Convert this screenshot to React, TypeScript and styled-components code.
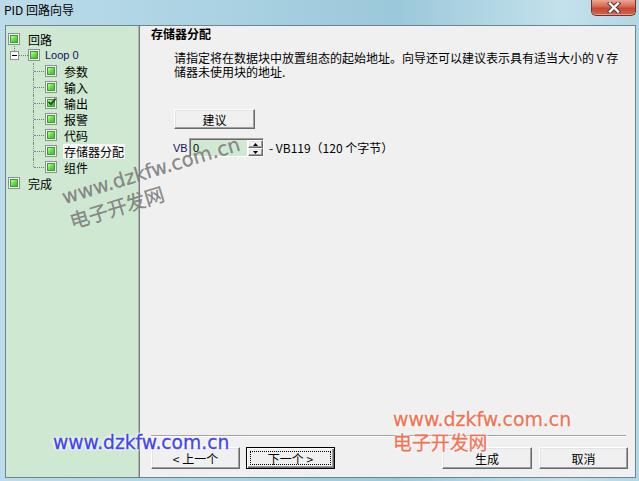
import * as React from 'react';
import styled, { createGlobalStyle, css } from 'styled-components';

type TreeItem = {
  label: string;
  level: 0 | 1 | 2;
  checked?: boolean;
  selected?: boolean;
  last?: boolean;
};

const tree: TreeItem[] = [
  { label: '回路', level: 0 },
  { label: 'Loop 0', level: 1 },
  { label: '参数', level: 2 },
  { label: '输入', level: 2 },
  { label: '输出', level: 2, checked: true },
  { label: '报警', level: 2 },
  { label: '代码', level: 2 },
  { label: '存储器分配', level: 2, selected: true },
  { label: '组件', level: 2, last: true },
  { label: '完成', level: 0 },
];

const indent = { 0: 2, 1: 4, 2: 27 };
const labelGap = { 0: 8, 1: 5, 2: 7 };

const GlobalStyle = createGlobalStyle`
  html, body {
    margin: 0;
    padding: 0;
    background: #ffffff;
  }
  body {
    font-family: "Noto Sans CJK SC", "DejaVu Sans", sans-serif;
    font-size: 12px;
    color: #000000;
  }
`;

const App = () => {
  return (
    <>
      <GlobalStyle />
      <Window>
        <TitleBar>
          <Title>PID 回路向导</Title>
          <CloseButton>
            <svg width="14" height="11" viewBox="0 0 14 11">
              <path d="M3 1.5 L11 9.5 M11 1.5 L3 9.5" stroke="#4a3a44" strokeWidth="4.4" strokeLinecap="square" />
              <path d="M3 1.5 L11 9.5 M11 1.5 L3 9.5" stroke="#ffffff" strokeWidth="2.4" strokeLinecap="square" />
            </svg>
          </CloseButton>
        </TitleBar>
        <Client>
          <Sidebar>
            {tree.map((item) => (
              <TreeNode key={item.label} item={item} />
            ))}
          </Sidebar>
          <Main>
            <Header>存储器分配</Header>
            <Description>
              <Line>请指定将在数据块中放置组态的起始地址。向导还可以建议表示具有适当大小的 V 存</Line>
              <Line>储器未使用块的地址.</Line>
            </Description>
            <SuggestButton>建议</SuggestButton>
            <VbRow>
              <VbLabel>VB</VbLabel>
              <SpinBox>
                <Field>0</Field>
                <Spinner>
                  <SpinHalf>
                    <svg width="5" height="3" viewBox="0 0 5 3"><polygon points="0,3 2.5,0 5,3" fill="#000" /></svg>
                  </SpinHalf>
                  <SpinHalf>
                    <svg width="5" height="3" viewBox="0 0 5 3"><polygon points="0,0 2.5,3 5,0" fill="#000" /></svg>
                  </SpinHalf>
                </Spinner>
              </SpinBox>
              <RangeText>- VB119（120 个字节）</RangeText>
            </VbRow>
            <Spacer />
            <Separator />
            <ButtonRow>
              <WizardButton>&lt; 上一个</WizardButton>
              <WizardButton $default>下一个 &gt;</WizardButton>
              <WizardButton $push>生成</WizardButton>
              <WizardButton>取消</WizardButton>
            </ButtonRow>
          </Main>
        </Client>

        <Watermark $left={59} $top={186} $angle={-17} $size={19.6} $lineHeight={26} $color="rgba(84, 84, 84, 0.68)" $glow={false}>
          www.dzkfw.com.cn
          <br />
          电子开发网
        </Watermark>
        <Watermark $left={53} $top={432} $size={18.7} $lineHeight={22} $color="#4444ee" $glow>
          www.dzkfw.com.cn
        </Watermark>
        <Watermark $left={393} $top={407} $size={18.9} $lineHeight={24} $color="#f07454" $glow>
          www.dzkfw.com.cn
          <br />
          电子开发网
        </Watermark>
      </Window>
    </>
  );
};

export default App;

const TreeNode = ({ item }: { item: TreeItem }) => (
  <Row $indent={indent[item.level]}>
    {item.level === 1 && (
      <>
        <Expander />
        <HLine />
      </>
    )}
    {item.level === 2 && <Guide $last={item.last} />}
    <CheckBox>
      <CheckFill>
        {item.checked && (
          <svg width="10" height="10" viewBox="0 0 10 10">
            <path d="M1.5 4.8 L4 7.3 L8.6 1.6" fill="none" stroke="#1d4a1d" strokeWidth="1.7" />
          </svg>
        )}
      </CheckFill>
    </CheckBox>
    <Label $gap={labelGap[item.level]} $selected={item.selected} $latin={item.level === 1}>
      {item.label}
    </Label>
  </Row>
);

const Window = styled.div`
  position: relative;
  width: 639px;
  height: 481px;
  display: flex;
  flex-direction: column;
  overflow: hidden;
  background: linear-gradient(90deg, #bcdce9 0%, #aad2e2 35%, #9bc8da 62%, #c3e1eb 88%, #b2d7e5 100%);
`;

const TitleBar = styled.div`
  height: 25px;
  display: flex;
  align-items: flex-start;
  padding-left: 4px;
`;

const Title = styled.div`
  font-size: 12px;
  line-height: 20px;
  color: #000000;
`;

const CloseButton = styled.div`
  margin-left: auto;
  margin-right: 3px;
  width: 45px;
  height: 16px;
  box-sizing: border-box;
  display: flex;
  align-items: center;
  justify-content: center;
  border: 1px solid #7a3126;
  border-top: none;
  border-radius: 0 0 5px 5px;
  background: linear-gradient(180deg, #eaa595 0%, #d8654f 45%, #c44731 55%, #d2674f 100%);
  box-shadow: inset 0 -1px 0 rgba(255, 255, 255, 0.35);
`;

const Client = styled.div`
  flex: 1;
  display: flex;
  margin: 0 3px 3px 5px;
  border: 1px solid #6e8591;
  min-height: 0;
`;

const Sidebar = styled.div`
  width: 132px;
  padding-top: 5px;
  background: #cfe8d1;
  border-right: 1px solid #b4b4b4;
  box-sizing: content-box;
`;

const Row = styled.div<{ $indent: number }>`
  height: 16px;
  display: flex;
  align-items: center;
  padding-left: ${(p) => p.$indent}px;
`;

const dotted = '1px dotted #7c7c7c';

const Expander = styled.span`
  position: relative;
  width: 9px;
  height: 9px;
  box-sizing: border-box;
  border: 1px solid #919191;
  background: #ffffff;
  flex-shrink: 0;

  &::before {
    content: '';
    position: absolute;
    left: 3px;
    top: -6px;
    height: 5px;
    border-left: ${dotted};
  }

  &::after {
    content: '';
    position: absolute;
    left: 1px;
    right: 1px;
    top: 3px;
    height: 1px;
    background: #000000;
  }
`;

const HLine = styled.span`
  width: 9px;
  border-top: ${dotted};
`;

const Guide = styled.span<{ $last?: boolean }>`
  position: relative;
  width: 12px;
  align-self: stretch;
  flex-shrink: 0;

  &::before {
    content: '';
    position: absolute;
    left: 0;
    top: 0;
    bottom: ${(p) => (p.$last ? '50%' : '0')};
    border-left: ${dotted};
  }

  &::after {
    content: '';
    position: absolute;
    left: 1px;
    top: 50%;
    width: 10px;
    border-top: ${dotted};
  }
`;

const CheckBox = styled.span`
  width: 12px;
  height: 12px;
  box-sizing: border-box;
  border: 1px solid #8e8f8f;
  background: #f6f6f6;
  display: flex;
  align-items: center;
  justify-content: center;
  flex-shrink: 0;
`;

const CheckFill = styled.span`
  position: relative;
  width: 8px;
  height: 8px;
  box-sizing: border-box;
  border: 1px solid #3a9e34;
  background: linear-gradient(135deg, #c6f8ae 0%, #5edc40 55%, #3cc42a 100%);

  svg {
    position: absolute;
    left: -1px;
    top: -3px;
  }
`;

const Label = styled.span<{ $gap: number; $selected?: boolean; $latin?: boolean }>`
  margin-left: ${(p) => p.$gap - (p.$selected ? 1 : 0)}px;
  padding: 0 ${(p) => (p.$selected ? 1 : 0)}px;
  line-height: 15px;
  white-space: nowrap;
  background: ${(p) => (p.$selected ? '#f6f6f6' : 'transparent')};
  ${(p) =>
    p.$latin &&
    css`
      font-family: "Liberation Sans", "Noto Sans CJK SC", sans-serif;
      font-size: 11px;
      color: #12125c;
    `}
`;

const Main = styled.div`
  flex: 1;
  display: flex;
  flex-direction: column;
  background: #f0f0f0;
  border-left: 1px solid #7a7a7a;
  padding: 0 7px 8px 11px;
`;

const Header = styled.div`
  font-weight: bold;
  line-height: 15px;
`;

const Description = styled.div`
  margin: 10px 0 0 23px;
  display: flex;
  flex-direction: column;
`;

const Line = styled.div`
  height: 14px;
  line-height: 14px;
  white-space: nowrap;
`;

const raised = css`
  box-sizing: border-box;
  background: #f0f0f0;
  border: 1px solid;
  border-color: #ffffff #696969 #696969 #ffffff;
  box-shadow: inset -1px -1px 0 #a0a0a0, inset 1px 1px 0 #e3e3e3;
`;

const buttonBase = css`
  ${raised};
  height: 22px;
  padding: 0;
  display: flex;
  align-items: center;
  justify-content: center;
  font-family: "Noto Sans CJK SC", sans-serif;
  font-size: 12px;
  color: #000000;
`;

const SuggestButton = styled.button`
  ${buttonBase};
  margin: 30px 0 0 23px;
  width: 81px;
  height: 20px;
`;

const VbRow = styled.div`
  margin: 9px 0 0 22px;
  display: flex;
  align-items: center;
  height: 19px;
`;

const VbLabel = styled.span`
  font-family: "Liberation Sans", sans-serif;
  font-size: 11px;
  color: #12125c;
  width: 16px;
`;

const SpinBox = styled.div`
  display: flex;
  height: 19px;
  box-sizing: border-box;
  border: 1px solid;
  border-color: #a0a0a0 #ffffff #ffffff #a0a0a0;
  box-shadow: inset 1px 1px 0 #696969;
  background: #ffffff;
`;

const Field = styled.div`
  width: 56px;
  margin: 1px 0 0 1px;
  padding-left: 2px;
  background: #d0e9d2;
  font-family: "Liberation Sans", sans-serif;
  font-size: 11px;
  line-height: 16px;
  box-sizing: border-box;
`;

const Spinner = styled.div`
  width: 15px;
  display: flex;
  flex-direction: column;
  padding: 1px 0 0 1px;
`;

const SpinHalf = styled.div`
  ${raised};
  flex: 1;
  display: flex;
  align-items: center;
  justify-content: center;
`;

const RangeText = styled.span`
  margin-left: 5px;
  line-height: 16px;
  white-space: nowrap;
`;

const Spacer = styled.div`
  flex: 1;
`;

const Separator = styled.div`
  height: 0;
  margin: 0 2px 10px 0;
  border-top: 1px solid #a0a0a0;
  border-bottom: 1px solid #ffffff;
`;

const ButtonRow = styled.div`
  display: flex;
  gap: 6px;
`;

const WizardButton = styled.button<{ $default?: boolean; $push?: boolean }>`
  ${buttonBase};
  position: relative;
  width: 89px;
  ${(p) =>
    p.$push &&
    css`
      margin-left: auto;
      margin-right: 1px;
      width: 90px;
    `}
  ${(p) =>
    p.$default &&
    css`
      border: 1px solid #000000;
      box-shadow: inset 1px 1px 0 #ffffff, inset -1px -1px 0 #696969, inset -2px -2px 0 #a0a0a0;

      &::after {
        content: '';
        position: absolute;
        inset: 3px;
        border: 1px dotted #000000;
      }
    `}
`;

const Watermark = styled.div<{
  $left: number;
  $top: number;
  $angle?: number;
  $size: number;
  $lineHeight: number;
  $color: string;
  $glow: boolean;
}>`
  position: absolute;
  left: ${(p) => p.$left}px;
  top: ${(p) => p.$top}px;
  transform: rotate(${(p) => p.$angle ?? 0}deg);
  transform-origin: 0 0;
  font-family: "DejaVu Sans", "Noto Sans CJK SC", sans-serif;
  font-size: ${(p) => p.$size}px;
  line-height: ${(p) => p.$lineHeight}px;
  color: ${(p) => p.$color};
  white-space: nowrap;
  pointer-events: none;
  -webkit-text-stroke: 0.3px ${(p) => p.$color};
  text-shadow: ${(p) =>
    p.$glow
      ? '0 0 2px #ffffff, 0 0 2px #ffffff, 0 0 3px #ffffff, 0 0 4px rgba(255,255,255,0.9)'
      : '0 0 1px rgba(255,255,255,0.7)'};
`;
